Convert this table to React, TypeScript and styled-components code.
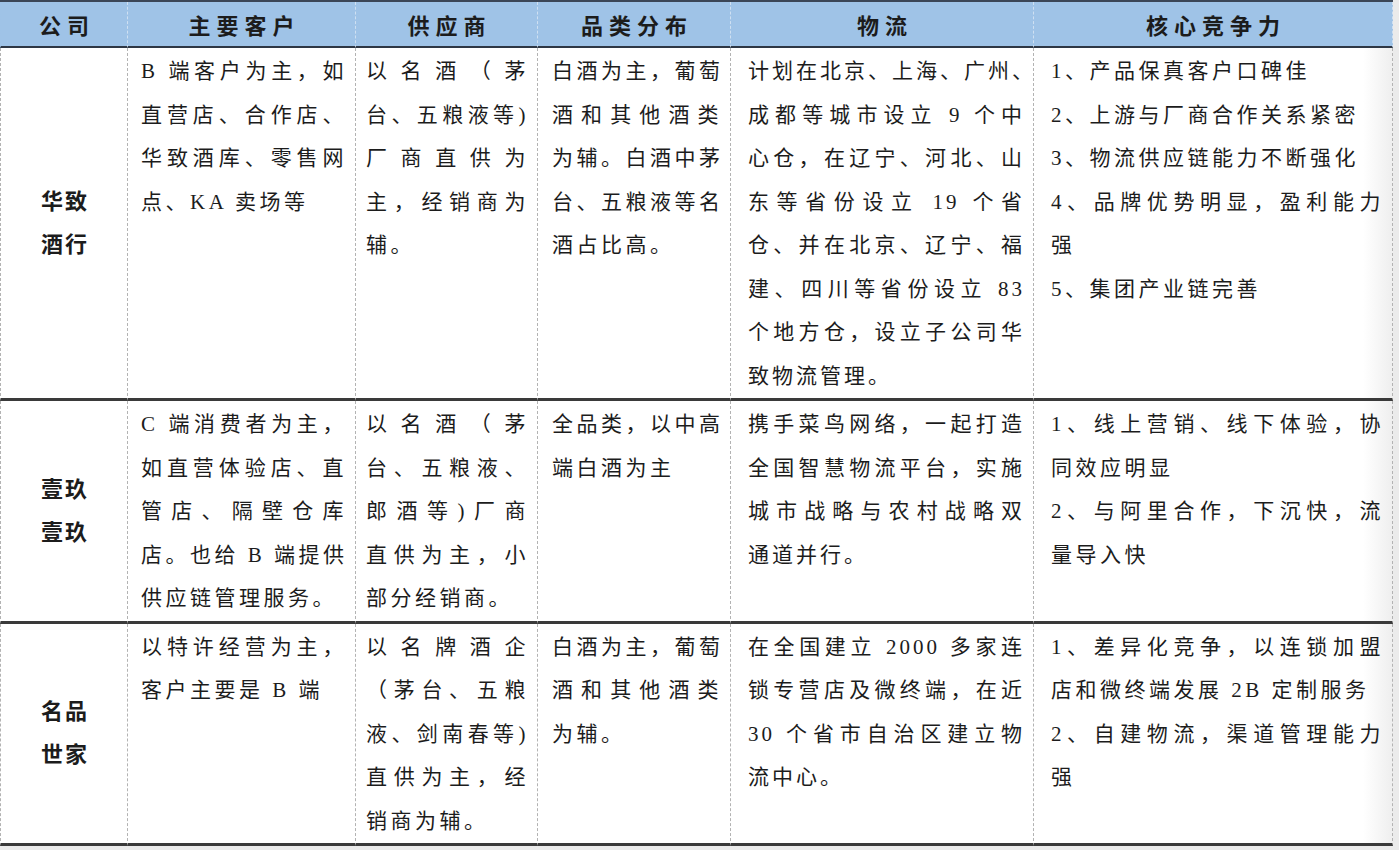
import { Fragment } from "react";
import styled, { createGlobalStyle } from "styled-components";

const GlobalStyle = createGlobalStyle`
  html, body {
    margin: 0;
    padding: 0;
    background: #ebebeb;
  }
  * {
    box-sizing: border-box;
  }
`;

const FONT = `"Liberation Serif", "Noto Sans CJK SC", serif`;

const Sheet = styled.div`
  display: grid;
  grid-template-columns: 127px 228px 182px 193px 303px 360px;
  width: 1393px;
  border-top: 2px solid #3b4657;
  background: linear-gradient(90deg, #ffffff calc(100% - 30px), #eeeeee 100%);
  font-family: ${FONT};
  color: #1c1c1c;
`;

const HeadCell = styled.div<{ $first?: boolean; $last?: boolean }>`
  height: 46px;
  display: flex;
  align-items: center;
  justify-content: center;
  background: #9fc3e7;
  border-bottom: 2px solid #2e3744;
  border-left: 1px dashed ${(p) => (p.$first ? "#9fc3e7" : "#cfe0f2")};
  border-right: ${(p) => (p.$last ? "1px dashed #cfe0f2" : "0")};
  font-size: 22px;
  font-weight: 700;
  letter-spacing: 6px;
  text-indent: 6px;
  white-space: nowrap;
`;

const NameCell = styled.div`
  display: flex;
  flex-direction: column;
  justify-content: center;
  align-items: center;
  border-left: 1px dashed #b3b3b3;
  border-bottom: 3px solid #3a3a3a;
  font-size: 22px;
  font-weight: 700;
  line-height: 43px;
  letter-spacing: 2px;
  padding-left: 2px;
`;

const Cell = styled.div<{ $padLeft: number; $spacing: number; $last?: boolean }>`
  border-left: 1px dashed #b3b3b3;
  border-right: ${(p) => (p.$last ? "1px dashed #b3b3b3" : "0")};
  border-bottom: 3px solid #3a3a3a;
  padding: 2px 8px 0 ${(p) => p.$padLeft}px;
  font-size: 21px;
  line-height: 43.5px;
  letter-spacing: ${(p) => p.$spacing}px;
`;

const Line = styled.div<{ $fill?: boolean }>`
  white-space: nowrap;
  text-align: ${(p) => (p.$fill ? "justify" : "left")};
  text-align-last: ${(p) => (p.$fill ? "justify" : "left")};
`;

const heads = ["公司", "主要客户", "供应商", "品类分布", "物流", "核心竞争力"];
const padLefts = [0, 13, 10, 14, 17, 17];
const spacings = [0, 3.5, 3.5, 3.5, 3, 3.5];

type Paragraph = string[];
type Row = { name: string[]; cells: Paragraph[][] };

const rows: Row[] = [
  {
    name: ["华致", "酒行"],
    cells: [
      [["B 端客户为主，如", "直营店、合作店、", "华致酒库、零售网", "点、KA 卖场等"]],
      [["以名酒（茅", "台、五粮液等)", "厂商直供为", "主，经销商为", "辅。"]],
      [["白酒为主，葡萄", "酒和其他酒类", "为辅。白酒中茅", "台、五粮液等名", "酒占比高。"]],
      [
        [
          "计划在北京、上海、广州、",
          "成都等城市设立 9 个中",
          "心仓，在辽宁、河北、山",
          "东等省份设立 19 个省",
          "仓、并在北京、辽宁、福",
          "建、四川等省份设立 83",
          "个地方仓，设立子公司华",
          "致物流管理。",
        ],
      ],
      [
        ["1、产品保真客户口碑佳"],
        ["2、上游与厂商合作关系紧密"],
        ["3、物流供应链能力不断强化"],
        ["4、品牌优势明显，盈利能力", "强"],
        ["5、集团产业链完善"],
      ],
    ],
  },
  {
    name: ["壹玖", "壹玖"],
    cells: [
      [["C 端消费者为主，", "如直营体验店、直", "管店、隔壁仓库", "店。也给 B 端提供", "供应链管理服务。"]],
      [["以名酒（茅", "台、五粮液、", "郎酒等)厂商", "直供为主，小", "部分经销商。"]],
      [["全品类，以中高", "端白酒为主"]],
      [["携手菜鸟网络，一起打造", "全国智慧物流平台，实施", "城市战略与农村战略双", "通道并行。"]],
      [
        ["1、线上营销、线下体验，协", "同效应明显"],
        ["2、与阿里合作，下沉快，流", "量导入快"],
      ],
    ],
  },
  {
    name: ["名品", "世家"],
    cells: [
      [["以特许经营为主，", "客户主要是 B 端"]],
      [["以名牌酒企", "（茅台、五粮", "液、剑南春等)", "直供为主，经", "销商为辅。"]],
      [["白酒为主，葡萄", "酒和其他酒类", "为辅。"]],
      [["在全国建立 2000 多家连", "锁专营店及微终端，在近", "30 个省市自治区建立物", "流中心。"]],
      [
        ["1、差异化竞争，以连锁加盟", "店和微终端发展 2B 定制服务"],
        ["2、自建物流，渠道管理能力", "强"],
      ],
    ],
  },
];

export default function App() {
  return (
    <>
      <GlobalStyle />
      <Sheet>
        {heads.map((h, i) => (
          <HeadCell key={h} $first={i === 0} $last={i === heads.length - 1}>
            {h}
          </HeadCell>
        ))}
        {rows.map((row) => (
          <Fragment key={row.name.join("")}>
            <NameCell>
              {row.name.map((n, i) => (
                <div key={i}>{n}</div>
              ))}
            </NameCell>
            {row.cells.map((paras, ci) => (
              <Cell
                key={ci}
                $padLeft={padLefts[ci + 1]}
                $spacing={spacings[ci + 1]}
                $last={ci === row.cells.length - 1}
              >
                {paras.map((lines) =>
                  lines.map((line, li) => (
                    <Line key={line} $fill={li < lines.length - 1}>
                      {line}
                    </Line>
                  ))
                )}
              </Cell>
            ))}
          </Fragment>
        ))}
      </Sheet>
    </>
  );
}
